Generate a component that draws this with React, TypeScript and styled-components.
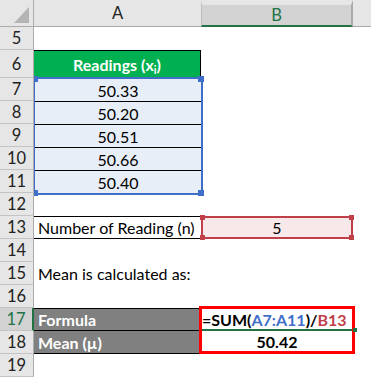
import React from "react";
import styled, { createGlobalStyle, css } from "styled-components";

const GlobalStyle = createGlobalStyle`
  html, body { margin: 0; padding: 0; background: #ffffff; }
  body { font-family: "Lato", "Open Sans", sans-serif; }
`;

const BLUE = "#3f6fc8";
const RED = "#c0404a";
const GREEN = "#217346";

const handles = (c: string, s: number) => css`
  content: "";
  position: absolute;
  inset: -3px;
  pointer-events: none;
  background:
    linear-gradient(${c}, ${c}) top left / ${s}px ${s}px no-repeat,
    linear-gradient(${c}, ${c}) top right / ${s}px ${s}px no-repeat,
    linear-gradient(${c}, ${c}) bottom left / ${s}px ${s}px no-repeat,
    linear-gradient(${c}, ${c}) bottom right / ${s}px ${s}px no-repeat;
`;

const Sheet = styled.div`
  display: grid;
  grid-template-columns: 34px 167px 152px 1fr;
  width: 371px;
  height: 377px;
  overflow: hidden;
  background: #ffffff;
  font-family: "Lato", "Open Sans", sans-serif;
  font-size: 16px;
  color: #000;
`;

const Column = styled.div<{ $z: number }>`
  display: flex;
  flex-direction: column;
  position: relative;
  z-index: ${(p) => p.$z};
  min-width: 0;
`;

const HeadCell = styled.div<{ $active?: boolean }>`
  box-sizing: border-box;
  flex: 0 0 27px;
  display: flex;
  align-items: center;
  justify-content: center;
  background: #e6e6e6;
  border-bottom: 1px solid #ababab;
  color: #222;
  font-size: 16.5px;
  ${(p) =>
    p.$active &&
    css`
      background: #d2d2d2;
      border-top: 5px solid #e6e6e6;
      border-left: 1px solid #bdbdbd;
      border-right: 2px solid #ababab;
      border-bottom: 2px solid ${GREEN};
      color: ${GREEN};
    `}
`;

const CornerCell = styled(HeadCell)`
  border-right: 1px solid #ababab;
  align-items: flex-end;
  justify-content: flex-end;
  padding: 0 3px 2px 0;
`;

const RowNum = styled.div<{ $h: number; $active?: boolean }>`
  box-sizing: border-box;
  flex: 0 0 ${(p) => p.$h}px;
  display: flex;
  align-items: center;
  justify-content: center;
  background: #e6e6e6;
  border-right: 1px solid #ababab;
  border-bottom: 1px solid #c4c4c4;
  color: #222;
  font-size: 16.5px;
  ${(p) =>
    p.$active &&
    css`
      background: #d2d2d2;
      color: ${GREEN};
      border-right: 2px solid ${GREEN};
    `}
`;

type CellProps = {
  $h?: number;
  $fill?: string;
  $bold?: boolean;
  $left?: boolean;
  $color?: string;
  $top?: boolean;
  $bottom?: boolean;
  $right?: boolean;
};

const Cell = styled.div<CellProps>`
  box-sizing: border-box;
  flex: ${(p) => (p.$h ? `0 0 ${p.$h}px` : "1 1 0")};
  display: flex;
  align-items: center;
  justify-content: ${(p) => (p.$left ? "flex-start" : "center")};
  padding: 0 4px;
  white-space: nowrap;
  background: ${(p) => p.$fill || "transparent"};
  font-weight: ${(p) => (p.$bold ? 700 : 400)};
  color: ${(p) => p.$color || "#000"};
  border-top: ${(p) => (p.$top ? "1px solid #000" : "none")};
  border-bottom: ${(p) => (p.$bottom ? "1px solid #000" : "none")};
  border-right: ${(p) => (p.$right ? "1px solid #000" : "none")};
`;

/* A7:A11 range referenced by the formula */
const RangeBox = styled.div`
  position: relative;
  box-sizing: border-box;
  flex: 0 0 118px;
  margin: -1px -2px -2px -1px;
  display: flex;
  flex-direction: column;
  border: 2px solid ${BLUE};
  background: #e8eef8;
  &::after {
    ${handles(BLUE, 6)}
  }
`;

/* B13 referenced by the formula */
const RefCell = styled(Cell)`
  position: relative;
  border: 2px solid ${RED};
  background: #f8e8ea;
  &::after {
    ${handles(RED, 5)}
  }
`;

/* red highlight around B17:B18 */
const Highlight = styled.div`
  box-sizing: border-box;
  flex: 0 0 48px;
  margin: -2px -2px 0 -2px;
  display: flex;
  flex-direction: column;
  border: 3px solid #ff0000;
`;

const ActiveCell = styled(Cell)`
  position: relative;
  padding-left: 0;
  border-bottom: 2px solid ${GREEN};
  &::after {
    content: "";
    position: absolute;
    right: -5px;
    bottom: -3px;
    width: 4px;
    height: 4px;
    background: ${GREEN};
  }
`;

const Ref = styled.span<{ $c: string }>`
  color: ${(p) => p.$c};
`;

const Sub = styled.sub`
  font-size: 11px;
  vertical-align: -3px;
  line-height: 0;
`;

const rowHeights: Record<number, number> = { 6: 28 };
const ROWS = Array.from({ length: 15 }, (_, i) => 5 + i);
const h = (n: number) => rowHeights[n] ?? 23;

const readings = ["50.33", "50.20", "50.51", "50.66", "50.40"];

export default function App() {
  return (
    <>
      <GlobalStyle />
      <Sheet>
        {/* row headers */}
        <Column $z={3}>
          <CornerCell>
            <svg width="16" height="17" viewBox="0 0 16 17">
              <polygon points="15,0 15,16 0,16" fill="#b4b4b4" />
            </svg>
          </CornerCell>
          {ROWS.map((n) => (
            <RowNum key={n} $h={h(n)} $active={n === 17}>
              {n}
            </RowNum>
          ))}
        </Column>

        {/* column A */}
        <Column $z={1}>
          <HeadCell>A</HeadCell>
          <Cell $h={23} />
          <Cell $h={28} $fill="#00b050" $bold $color="#fff" $top $right>
            <span>
              Readings (x<Sub>i</Sub>)
            </span>
          </Cell>
          <RangeBox>
            {readings.map((r, i) => (
              <Cell key={r} $bottom={i < readings.length - 1}>
                {r}
              </Cell>
            ))}
          </RangeBox>
          <Cell $h={23} />
          <Cell $h={23} $left $top $bottom>
            Number of Reading (n)
          </Cell>
          <Cell $h={23} />
          <Cell $h={23} $left>
            Mean is calculated as:
          </Cell>
          <Cell $h={23} />
          <Cell $h={23} $fill="#808080" $bold $color="#fff" $left $top $bottom>
            Formula
          </Cell>
          <Cell $h={23} $fill="#808080" $bold $color="#fff" $left $bottom>
            Mean (µ)
          </Cell>
          <Cell $h={23} />
        </Column>

        {/* column B */}
        <Column $z={2}>
          <HeadCell $active>B</HeadCell>
          {ROWS.filter((n) => n <= 12).map((n) => (
            <Cell key={n} $h={h(n)} />
          ))}
          <RefCell $h={23}>5</RefCell>
          <Cell $h={23} />
          <Cell $h={23} />
          <Cell $h={23} />
          <Highlight>
            <ActiveCell $bold $left>
              <span>
                =SUM(<Ref $c={BLUE}>A7:A11</Ref>)/<Ref $c={RED}>B13</Ref>
              </span>
            </ActiveCell>
            <Cell $bold>50.42</Cell>
          </Highlight>
          <Cell $h={23} />
        </Column>

        {/* remaining space */}
        <Column $z={0}>
          <HeadCell />
        </Column>
      </Sheet>
    </>
  );
}
